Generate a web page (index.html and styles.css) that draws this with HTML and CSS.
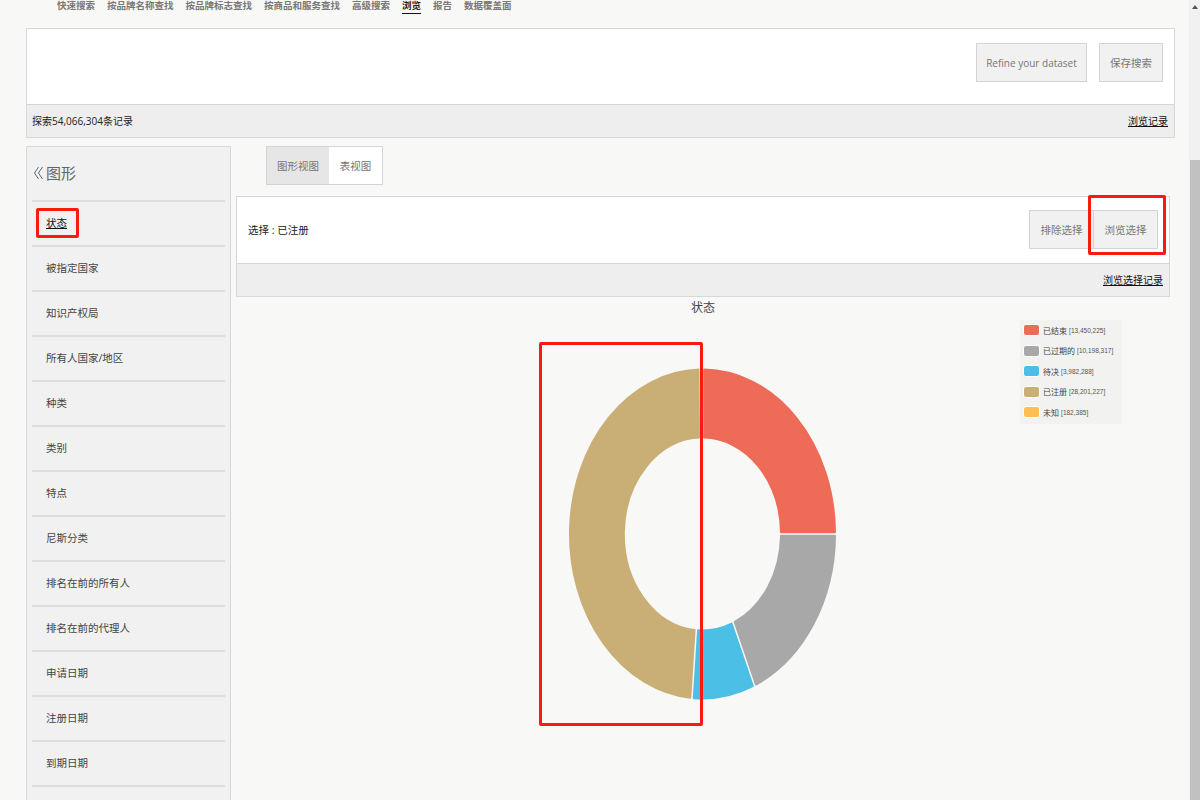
FILE: index.html
```html
<!DOCTYPE html>
<html lang="zh-CN">
<head>
  <meta charset="UTF-8" />
  <meta name="viewport" content="width=device-width, initial-scale=1.0" />
  <title>浏览</title>
  <link rel="stylesheet" href="styles.css">
</head>
<body>
  <nav class="top-nav">
    <a>快速搜索</a>
    <a>按品牌名称查找</a>
    <a>按品牌标志查找</a>
    <a>按商品和服务查找</a>
    <a>高级搜索</a>
    <a class="active">浏览</a>
    <a>报告</a>
    <a>数据覆盖面</a>
  </nav>

  <section class="panel search-panel">
    <div class="panel-body">
      <button class="btn btn-refine">Refine your dataset</button>
      <button class="btn btn-save">保存搜索</button>
    </div>
    <div class="panel-foot">
      <span>探索54,066,304条记录</span>
      <a class="link">浏览记录</a>
    </div>
  </section>

  <div class="columns">
    <aside class="sidebar">
      <h2 class="side-title">
        <svg class="chevrons" viewBox="0 0 10 14" width="10" height="14">
          <path d="M5.5 1 1.5 7l4 6M9.5 1 5.5 7l4 6" />
        </svg>
        图形
      </h2>
      <ul class="side-list">
        <li class="current">状态</li>
        <li>被指定国家</li>
        <li>知识产权局</li>
        <li>所有人国家/地区</li>
        <li>种类</li>
        <li>类别</li>
        <li>特点</li>
        <li>尼斯分类</li>
        <li>排名在前的所有人</li>
        <li>排名在前的代理人</li>
        <li>申请日期</li>
        <li>注册日期</li>
        <li>到期日期</li>
      </ul>
    </aside>

    <main class="content">
      <div class="tabs">
        <a class="tab selected">图形视图</a>
        <a class="tab">表视图</a>
      </div>

      <section class="panel select-panel">
        <div class="panel-body">
          <span class="selection">选择 : 已注册</span>
          <div class="btn-group">
            <button class="btn btn-exclude">排除选择</button>
            <button class="btn btn-browse">浏览选择</button>
          </div>
        </div>
        <div class="panel-foot right">
          <a class="link">浏览选择记录</a>
        </div>
      </section>

      <div class="chart">
        <div class="chart-title">状态</div>
        <svg class="donut" viewBox="0.5 0 280 340" width="280" height="340">
          <path fill="#ed6b57" stroke="#ed6b57" d="M141.75 5.51A132.5 164.5 0 0 1 272.49 168.25L218.49 168.25A78.5 96.5 0 0 0 141.75 73.52Z" />
          <path fill="#a8a8a8" stroke="#a8a8a8" d="M272.49 171.75A132.5 164.5 0 0 1 193.44 320.51L172.19 258A78.5 96.5 0 0 0 218.49 171.75Z" />
          <path fill="#4bbfe6" stroke="#4bbfe6" d="M190.3 322.15A132.5 164.5 0 0 1 131.31 334.14L135.58 266.36A78.5 96.5 0 0 0 169.04 259.64Z" />
          <path fill="#c9af75" stroke="#c9af75" d="M127.82 333.8A132.5 164.5 0 0 1 136 5.57L136.5 73.6A78.5 96.5 0 0 0 132.09 266.04Z" />
        </svg>
        <ul class="legend">
          <li><i class="swatch red"></i>已结束 <small>[13,450,225]</small></li>
          <li><i class="swatch grey"></i>已过期的 <small>[10,198,317]</small></li>
          <li><i class="swatch blue"></i>待决 <small>[3,982,288]</small></li>
          <li><i class="swatch tan"></i>已注册 <small>[28,201,227]</small></li>
          <li><i class="swatch yellow"></i>未知 <small>[182,385]</small></li>
        </ul>
      </div>
    </main>
  </div>

  <!-- red boxes drawn on top of the screenshot -->
  <div class="mark mark-status"></div>
  <div class="mark mark-browse"></div>
  <div class="mark mark-slice"></div>

  <div class="scrollbar">
    <span class="arrow"></span>
    <span class="thumb"></span>
  </div>
</body>
</html>
```

FILE: styles.css
```css
* {
  box-sizing: border-box;
}
html, body {
  height: 800px;
  overflow: hidden;
}
body {
  margin: 0;
  position: relative;
  background: #f8f8f6;
  color: #333;
  font-family: "Open Sans", "Noto Sans CJK SC", sans-serif;
  font-size: 10.5px;
}
ul {
  list-style: none;
  margin: 0;
  padding: 0;
}

.top-nav {
  display: flex;
  align-items: flex-start;
  gap: 12px;
  height: 28px;
  padding-left: 57px;
  font-size: 9.5px;
  font-weight: 700;
  color: #777;
}
.top-nav a {
  line-height: 12px;
  padding-bottom: 1px;
}
.top-nav a.active {
  color: #222;
  border-bottom: 1.5px solid #111;
}

.panel {
  background: #fff;
  border: 1px solid #d8d8d8;
}
.panel-body {
  display: flex;
  background: #fff;
}
.panel-foot {
  display: flex;
  justify-content: space-between;
  align-items: center;
  height: 33px;
  padding: 0 6px 1px 5px;
  background: #eee;
  border-top: 1px solid #d4d4d4;
  color: #222;
  font-size: 10px;
}
.panel-foot.right {
  justify-content: flex-end;
}
.link {
  color: #111;
  text-decoration: underline;
}

.btn {
  height: 39px;
  background: #f1f1f1;
  border: 1px solid #d4d4d4;
  color: #777;
  font: inherit;
  padding: 0;
}

.search-panel {
  width: 1149px;
  margin-left: 26px;
}
.search-panel .panel-body {
  justify-content: flex-end;
  gap: 12px;
  height: 75px;
  padding: 14px 11px 0 0;
}
.btn-refine {
  width: 111px;
  font-size: 10px;
}
.btn-save {
  width: 64px;
}

.columns {
  display: flex;
  gap: 5px;
  margin: 8px 0 0 26px;
}

.sidebar {
  width: 205px;
  height: 660px;
  padding: 0 5px;
  background: #f1f1f1;
  border: 1px solid #d8d8d8;
}
.side-title {
  display: flex;
  align-items: center;
  gap: 3px;
  height: 55px;
  margin: 0;
  padding: 0 0 2px 1px;
  font-size: 15px;
  font-weight: 400;
  color: #666;
  border-bottom: 2px solid #ddd;
}
.chevrons path {
  fill: none;
  stroke: #666;
  stroke-width: 1;
}
.side-list li {
  display: flex;
  align-items: center;
  height: 45px;
  padding: 0 0 2px 14px;
  color: #444;
  border-bottom: 2px solid #ddd;
}
.side-list li.current {
  color: #111;
  text-decoration: underline;
}

.content {
  width: 934px;
}
.tabs {
  display: flex;
  width: 117px;
  height: 39px;
  margin-left: 30px;
  background: #fff;
  border: 1px solid #d4d4d4;
}
.tab {
  display: flex;
  align-items: center;
  justify-content: center;
  flex: 1;
  color: #777;
}
.tab.selected {
  flex: 0 0 62px;
  background: #e6e6e6;
}

.select-panel {
  margin-top: 11px;
}
.select-panel .panel-body {
  justify-content: space-between;
  align-items: center;
  height: 66px;
  padding: 0 11px 2px;
}
.selection {
  color: #222;
}
.btn-group {
  display: flex;
}
.btn-exclude {
  width: 64px;
  border-right: 0;
}
.btn-browse {
  width: 65px;
}

.chart {
  position: relative;
  height: 504px;
  padding-top: 3px;
}
.chart-title {
  height: 16px;
  line-height: 16px;
  text-align: center;
  font-size: 12px;
  color: #444;
}
.donut {
  display: block;
  margin: 48px auto 0;
}
.donut path {
  stroke-width: 2;
  stroke-linejoin: round;
}
.legend {
  position: absolute;
  left: 784px;
  top: 23px;
  width: 102px;
  height: 104px;
  padding: 0 3px;
  background: #f2f2f0;
  font-size: 8px;
  color: #444;
}
.legend li {
  display: flex;
  align-items: center;
  height: 20.5px;
  white-space: pre;
}
.legend small {
  font-family: "Liberation Sans", sans-serif;
  font-size: 6.5px;
  color: #555;
}
.swatch {
  flex: none;
  width: 17px;
  height: 12px;
  margin-right: 3px;
  border: 1px solid #fff;
  border-radius: 3px;
}
.swatch.red { background: #ed6b57; }
.swatch.grey { background: #a8a8a8; }
.swatch.blue { background: #4bbfe6; }
.swatch.tan { background: #c9af75; }
.swatch.yellow { background: #fdbf50; }

.mark {
  position: absolute;
  border: 3px solid #fb1a12;
  border-radius: 2px;
}
.mark-status {
  left: 36px;
  top: 208px;
  width: 43px;
  height: 30px;
}
.mark-browse {
  left: 1088px;
  top: 195px;
  width: 78px;
  height: 60px;
}
.mark-slice {
  left: 539px;
  top: 342px;
  width: 164px;
  height: 384px;
}

.scrollbar {
  position: absolute;
  top: 0;
  right: 0;
  width: 11px;
  height: 800px;
  background: #f1f1f1;
}
.arrow {
  position: absolute;
  top: 5px;
  left: 3px;
  border: 3px solid transparent;
  border-top: 0;
  border-bottom: 4px solid #555;
}
.thumb {
  position: absolute;
  top: 160px;
  left: 1px;
  right: 0;
  bottom: 0;
  background: #c1c1c1;
}
```
